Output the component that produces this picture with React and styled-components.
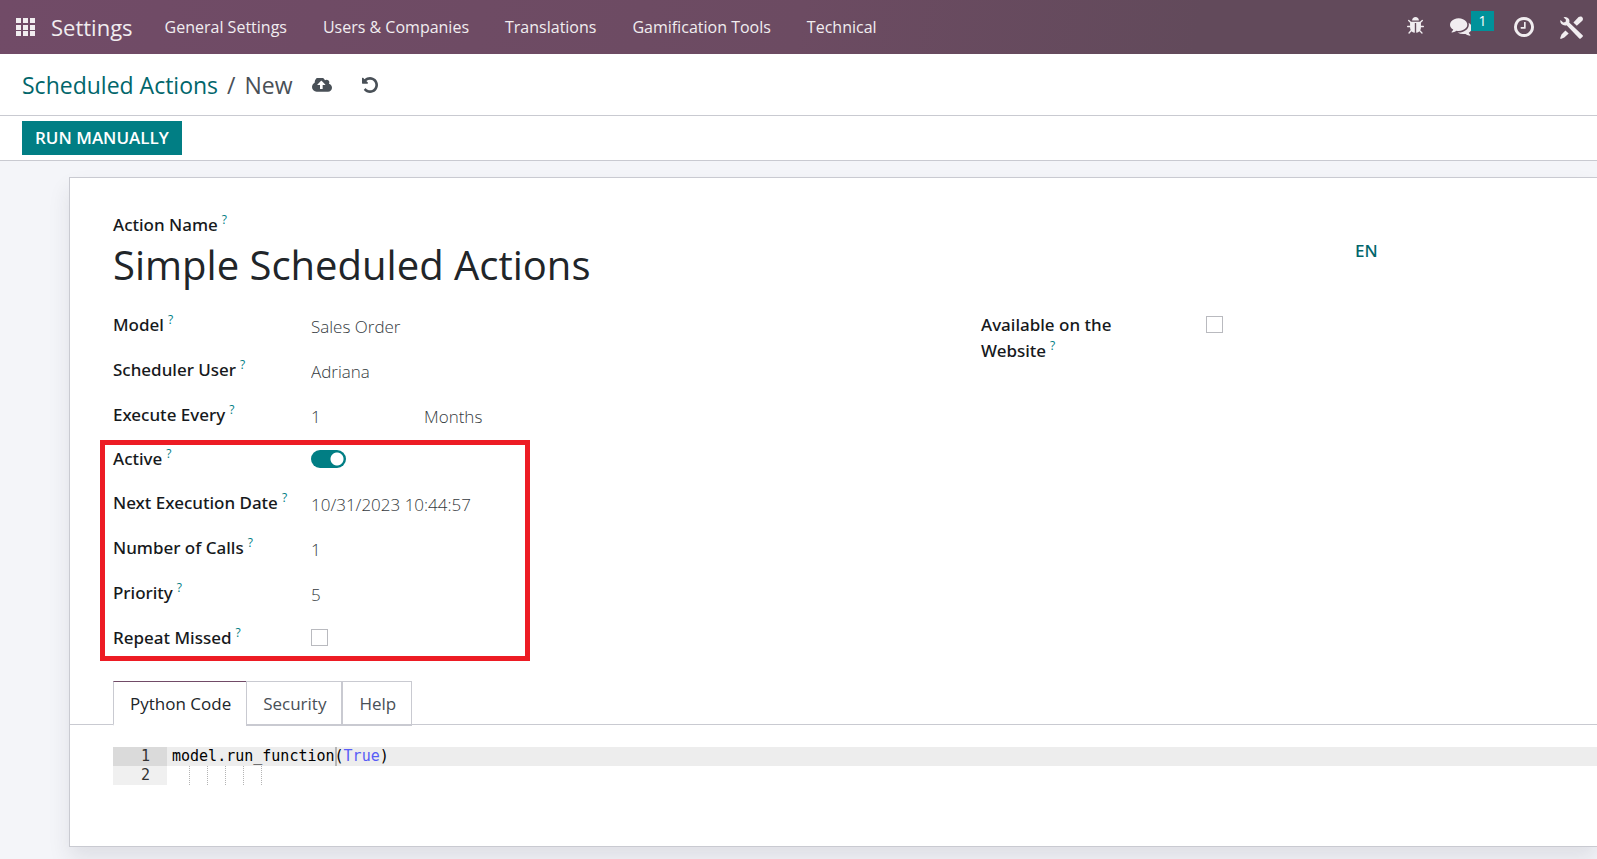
import React from "react";
import styled, { createGlobalStyle } from "styled-components";

const teal = "#017e84";
const line = "#c9cad1";

const Global = createGlobalStyle`
  *, *::before, *::after { box-sizing: border-box; }
  body {
    margin: 0;
    min-height: 100vh;
    background: #f4f5f9;
    color: #212529;
    font: 17px/27px "Open Sans", "Noto Sans", sans-serif;
    overflow-x: hidden;
  }
  button, input, select, textarea { font: inherit; color: inherit; }
`;

const Navbar = styled.header`
  display: flex;
  align-items: center;
  justify-content: space-between;
  height: 54px;
  padding: 0 14px 0 16px;
  background: linear-gradient(100deg, #714b67 0%, #6c4b62 50%, #624a5b 75%);
  color: #f1edf0;
`;

const Menu = styled.nav`
  display: flex;
  align-items: center;
  gap: 36px;
`;

const Brand = styled.div`
  display: flex;
  align-items: center;
  gap: 16px;
  margin-right: -4px;
`;

const NavLink = styled.a`
  color: inherit;
  text-decoration: none;
  white-space: nowrap;
  font-size: ${(p) => (p.$brand ? "22px" : "16px")};
`;

const Systray = styled.div`
  display: flex;
  align-items: center;
  gap: 26px;
`;

const IconButton = styled.button`
  display: flex;
  position: relative;
  padding: 0;
  border: 0;
  background: none;
  color: inherit;
`;

const Chat = styled(IconButton)`
  margin-right: 16px;
`;

const Badge = styled.span`
  position: absolute;
  left: 21px;
  top: -7px;
  width: 23px;
  height: 20px;
  background: #00929a;
  color: #fff;
  font-size: 14px;
  line-height: 20px;
  text-align: center;
`;

const ControlPanel = styled.div`
  display: flex;
  align-items: center;
  height: 62px;
  padding: 0 22px;
  gap: 30px;
  background: #fff;
  border-bottom: 1px solid ${line};
  color: #495057;
`;

const Crumbs = styled.div`
  display: flex;
  gap: 9px;
  margin-right: -11px;
  font-size: 23px;
  line-height: 32px;
`;

const CrumbLink = styled.a`
  color: #01666b;
  text-decoration: none;
`;

const StatusBar = styled.div`
  display: flex;
  align-items: center;
  height: 45px;
  padding: 0 22px;
  background: #fff;
  border-bottom: 1px solid ${line};
`;

const PrimaryButton = styled.button`
  height: 34px;
  padding: 0 13px;
  border: 0;
  background: ${teal};
  color: #fff;
  font-weight: 600;
  line-height: 34px;
`;

const Sheet = styled.main`
  margin: 16px 0 13px 69px;
  padding: 33px 0 61px;
  background: #fff;
  border: 1px solid ${line};
  border-right: 0;
  box-shadow: 0 12px 20px rgba(40, 44, 60, 0.1);
`;

const TitleBlock = styled.div`
  display: grid;
  grid-template-columns: 1fr 242px;
  padding-left: 43px;
`;

const LabelCell = styled.div`
  padding-top: 1px;
  line-height: 26px;
`;

const Label = styled.label`
  font-family: "Noto Sans", sans-serif;
  font-weight: 500;
  color: #16191c;
`;

const Help = styled.sup`
  margin-left: 4px;
  color: ${teal};
  font-size: 12px;
  line-height: 0;
`;

const Field = styled.input`
  display: block;
  width: ${(p) => p.$width || "100%"};
  height: 27px;
  padding: 0;
  border: 0;
  outline: 0;
  background: none;
  color: #343a40;
  font-weight: 300;
`;

const TitleField = styled(Field)`
  height: 52px;
  color: #212529;
  font-size: 40px;
  font-weight: 400;
`;

const Language = styled.button`
  align-self: center;
  justify-self: start;
  padding: 0;
  border: 0;
  background: none;
  color: #01666b;
  font-family: "Noto Sans", sans-serif;
  font-weight: 500;
`;

const Groups = styled.div`
  display: grid;
  grid-template-columns: 868px 1fr;
  padding: 21px 0 0 43px;
`;

const Rows = styled.div`
  display: grid;
  align-content: start;
  row-gap: 17px;
`;

const Row = styled.div`
  display: grid;
  grid-template-columns: ${(p) => p.$label || "198px"} 1fr;
`;

const Values = styled.div`
  display: flex;
  padding-top: 2px;
  height: 28px;
`;

const Select = styled.select`
  appearance: none;
  height: 27px;
  padding: 0;
  border: 0;
  background: none;
  color: #343a40;
  font-weight: 300;
`;

const Highlight = styled.div`
  display: grid;
  row-gap: 17px;
  width: 430px;
  margin: -6px 0 0 -13px;
  padding: 0 8px 5px;
  border: 5px solid #ed1c24;
`;

const CheckBox = styled.input`
  appearance: none;
  width: 17px;
  height: 17px;
  margin: 5px 0 0;
  border: 1px solid #b9babf;
  background: #fff;
`;

const Switch = styled.input`
  appearance: none;
  width: 35px;
  height: 18px;
  margin: 5px 0 0;
  border-radius: 9px;
  background: radial-gradient(circle at 26px 9px, #fff 6px, transparent 7px) ${teal};
`;

const Tabs = styled.div`
  display: flex;
  margin-top: 20px;
  padding-left: 43px;
  border-bottom: 1px solid ${line};
`;

const Tab = styled.button`
  height: 45px;
  margin-bottom: -2px;
  padding: 0 15px 0 16px;
  border: 1px solid ${line};
  border-bottom-width: 2px;
  border-right-width: ${(p) => (p.$active ? "0" : "1px")};
  border-top-color: ${(p) => (p.$active ? "#714b67" : line)};
  border-bottom-color: ${(p) => (p.$active ? "#fff" : line)};
  background: #fff;
  color: ${(p) => (p.$active ? "#212529" : "#495057")};
`;

const Editor = styled.div`
  margin: 22px 0 0 43px;
  font: 15px/19px "DejaVu Sans Mono", monospace;
`;

const CodeLine = styled.div`
  display: grid;
  grid-template-columns: 54px 1fr;
  height: 19px;
  background: ${(p) => (p.$active ? "#ededed" : "#fff")};
  color: #000;
`;

const Gutter = styled.span`
  padding-right: 17px;
  background: ${(p) => (p.$active ? "#dadada" : "#f0f0f0")};
  color: #333;
  text-align: right;
`;

const Code = styled.code`
  display: flex;
  padding-left: 5px;
  font: inherit;
`;

const Constant = styled.span`
  color: #585cf6;
`;

const Caret = styled.span`
  width: 2px;
  margin-right: -2px;
  background: #b5b5b5;
`;

const Guide = styled.span`
  width: 18px;
  border-right: 1px dotted #b4b4b4;
`;

const glyphs = {
  clock: "M1024 544v448q0 14-9 23t-23 9h-320q-14 0-23-9t-9-23v-64q0-14 9-23t23-9h224v-352q0-14 9-23t23-9h64q14 0 23 9t9 23zm416 352q0-148-73-273t-198-198-273-73-273 73-198 198-73 273 73 273 198 198 273 73 273-73 198-198 73-273zm224 0q0 209-103 385.500t-279.500 279.500-385.500 103-385.500-103-279.500-279.500-103-385.500 103-385.500 279.500-279.500 385.500-103 385.500 103 279.500 279.500 103 385.500z",
  comments: "M1408 768q0 139-94 257t-256.500 186.500-353.500 68.500q-86 0-176-16-124 88-278 128-36 9-86 16h-3q-11 0-20.500-8t-11.500-21q-1-3-1-6.500t.5-6.500 2-6l2.500-5 3.500-5.500 4-5 4.500-5 4-4.500q5-6 23-25t26-29.500 22.500-29 25-38.500 20.500-44q-124-72-195-177t-71-224q0-139 94-257t256.500-186.500 353.500-68.500 353.500 68.500 256.500 186.500 94 257zm384 256q0 120-71 224.500t-195 176.500q10 24 20.500 44t25 38.500 22.500 29 26 29.500 23 25q1 1 4 4.500t4.500 5 4 5 3.500 5.500l2.500 5 2 6 .5 6.500-1 6.500q-3 14-13 22t-22 7q-50-7-86-16-154-40-278-128-90 16-176 16-271 0-472-132 58 4 88 4 161 0 309-45t264-129q125-92 192-212t67-254q0-77-23-152 129 71 204 178t75 230z",
  bug: "M1696 960q0 26-19 45t-45 19h-224q0 171-67 290l208 209q19 19 19 45t-19 45q-18 19-45 19t-45-19l-198-197q-5 5-15 13t-42 28.500-65 36.500-82 29-97 13v-896h-128v896q-51 0-101.500-13.500t-87-33-66-39-43.500-32.500l-15-14-183 207q-20 21-48 21-24 0-43-16-19-18-20.500-44.500t15.500-46.500l202-227q-58-114-58-274h-224q-26 0-45-19t-19-45 19-45 45-19h224v-294l-173-173q-19-19-19-45t19-45 45-19 45 19l173 173h844l173-173q19-19 45-19t45 19 19 45-19 45l-173 173v294h224q26 0 45 19t19 45zm-480-576h-640q0-133 93.500-226.500t226.500-93.500 226.500 93.500 93.500 226.500z",
  undo: "M1664 896q0 156-61 298t-164 245-245 164-298 61q-172 0-327-72.500t-264-204.500q-7-10-6.500-22.500t8.500-20.500l137-138q10-9 25-9 16 2 23 12 73 95 179 147t225 52q104 0 198.500-40.500t163.500-109.500 109.500-163.500 40.500-198.500-40.500-198.500-109.500-163.500-163.500-109.500-198.500-40.500q-98 0-188 35.500t-160 101.500l137 138q31 30 14 69-17 40-59 40h-448q-26 0-45-19t-19-45v-448q0-42 40-59 39-17 69 14l130 129q107-101 244.500-156.500t284.500-55.500q156 0 298 61t245 164 164 245 61 298z",
  cloud: "M1216 864q0-14-9-23l-352-352q-9-9-23-9t-23 9l-351 351q-10 12-10 24 0 14 9 23t23 9h224v352q0 13 9.500 22.500t22.500 9.500h192q13 0 22.500-9.500t9.500-22.500v-352h224q13 0 22.500-9.500t9.500-22.500zm640 288q0 159-112.500 271.500t-271.500 112.500h-1088q-185 0-316.500-131.500t-131.500-316.500q0-130 70-240t188-165q-2-30-2-43 0-212 150-362t362-150q156 0 285.500 87t188.500 231q71-62 166-62 106 0 181 75t75 181q0 76-41 138 130 31 213.500 135.500t83.500 238.500z",
};

function Glyph({ name, box, width, height }) {
  return (
    <svg width={width} height={height} viewBox={box} fill="currentColor" aria-hidden="true">
      <path d={glyphs[name]} />
    </svg>
  );
}

function AppsIcon() {
  return (
    <svg width="19" height="18" viewBox="0 0 19 18" fill="currentColor" aria-hidden="true">
      {[0, 7, 14].map((x) =>
        [0, 7, 13].map((y) => <rect key={`${x}-${y}`} x={x} y={y} width="5" height="5" />)
      )}
    </svg>
  );
}

function ToolsIcon() {
  return (
    <svg width="23" height="23" viewBox="0 0 23 23" fill="currentColor" aria-hidden="true">
      <path d="M3.500 1.200Q6.800 .4 8.700 2.700Q9.900 4.300 9.200 6.500L22.600 19.300Q23.200 20 22.600 20.700L20.700 22.500Q20 23 19.300 22.400L6.600 9.300Q3.500 10 1.500 8Q-.2 6.200 .5 4L3.200 6.500L5.500 5.900L6 3.700Z" />
      <path d="M13.400 6.600L18.600 1Q20 0 21.400 .6L22.700 1.800Q23.300 3.400 22.300 4.700L16.800 9.800ZM5.400 14.400L8.700 17.600L4.300 21.500L.8 23L.1 22.200L1.500 18.600Z" />
    </svg>
  );
}

function FieldLabel({ id, children }) {
  return (
    <LabelCell>
      <Label htmlFor={id}>{children}</Label>
      <Help>?</Help>
    </LabelCell>
  );
}

function FieldRow({ id, label, labelWidth, children }) {
  return (
    <Row $label={labelWidth}>
      <FieldLabel id={id}>{label}</FieldLabel>
      {children}
    </Row>
  );
}

function TextRow({ id, label, value }) {
  return (
    <FieldRow id={id} label={label}>
      <Values>
        <Field id={id} defaultValue={value} />
      </Values>
    </FieldRow>
  );
}

const menuItems = ["General Settings", "Users & Companies", "Translations", "Gamification Tools", "Technical"];

export default function App() {
  return (
    <>
      <Global />
      <Navbar>
        <Menu>
          <Brand>
            <IconButton aria-label="Apps"><AppsIcon /></IconButton>
            <NavLink href="#" $brand>Settings</NavLink>
          </Brand>
          {menuItems.map((item) => <NavLink href="#" key={item}>{item}</NavLink>)}
        </Menu>
        <Systray>
          <IconButton aria-label="Debug"><Glyph name="bug" box="96 64 1600 1882" width="17" height="20" /></IconButton>
          <Chat aria-label="Messages">
            <Glyph name="comments" box="0 256 1792 1408" width="22" height="18" />
            <Badge>1</Badge>
          </Chat>
          <IconButton aria-label="Activities"><Glyph name="clock" box="128 128 1536 1536" width="20" height="20" /></IconButton>
          <IconButton aria-label="Tools"><ToolsIcon /></IconButton>
        </Systray>
      </Navbar>
      <ControlPanel>
        <Crumbs>
          <CrumbLink href="#">Scheduled Actions</CrumbLink>
          <span>/</span>
          <span>New</span>
        </Crumbs>
        <IconButton aria-label="Save"><Glyph name="cloud" box="-64 256 1920 1280" width="20" height="14" /></IconButton>
        <IconButton aria-label="Discard"><Glyph name="undo" box="128 128 1536 1536" width="16" height="16" /></IconButton>
      </ControlPanel>
      <StatusBar>
        <PrimaryButton>RUN MANUALLY</PrimaryButton>
      </StatusBar>
      <Sheet>
        <TitleBlock>
          <div>
            <FieldLabel id="name">Action Name</FieldLabel>
            <TitleField id="name" defaultValue="Simple Scheduled Actions" />
          </div>
          <Language>EN</Language>
        </TitleBlock>
        <Groups>
          <Rows>
            <TextRow id="model" label="Model" value="Sales Order" />
            <TextRow id="user" label="Scheduler User" value="Adriana" />
            <FieldRow id="every" label="Execute Every">
              <Values>
                <Field id="every" $width="113px" defaultValue="1" />
                <Select aria-label="Interval unit" defaultValue="Months">
                  <option>Months</option>
                </Select>
              </Values>
            </FieldRow>
            <Highlight>
              <FieldRow id="active" label="Active">
                <Switch id="active" type="checkbox" role="switch" defaultChecked />
              </FieldRow>
              <TextRow id="next" label="Next Execution Date" value="10/31/2023 10:44:57" />
              <TextRow id="calls" label="Number of Calls" value="1" />
              <TextRow id="priority" label="Priority" value="5" />
              <FieldRow id="missed" label="Repeat Missed">
                <CheckBox id="missed" type="checkbox" />
              </FieldRow>
            </Highlight>
          </Rows>
          <FieldRow id="website" labelWidth="225px" label={<>Available on the<br />Website</>}>
            <CheckBox id="website" type="checkbox" />
          </FieldRow>
        </Groups>
        <Tabs role="tablist">
          <Tab role="tab" aria-selected="true" $active>Python Code</Tab>
          <Tab role="tab">Security</Tab>
          <Tab role="tab">Help</Tab>
        </Tabs>
        <Editor>
          <CodeLine $active>
            <Gutter $active>1</Gutter>
            <Code>model.run_function<Caret />(<Constant>True</Constant>)</Code>
          </CodeLine>
          <CodeLine>
            <Gutter>2</Gutter>
            <Code>{[1, 2, 3, 4, 5].map((n) => <Guide key={n} />)}</Code>
          </CodeLine>
        </Editor>
      </Sheet>
    </>
  );
}
